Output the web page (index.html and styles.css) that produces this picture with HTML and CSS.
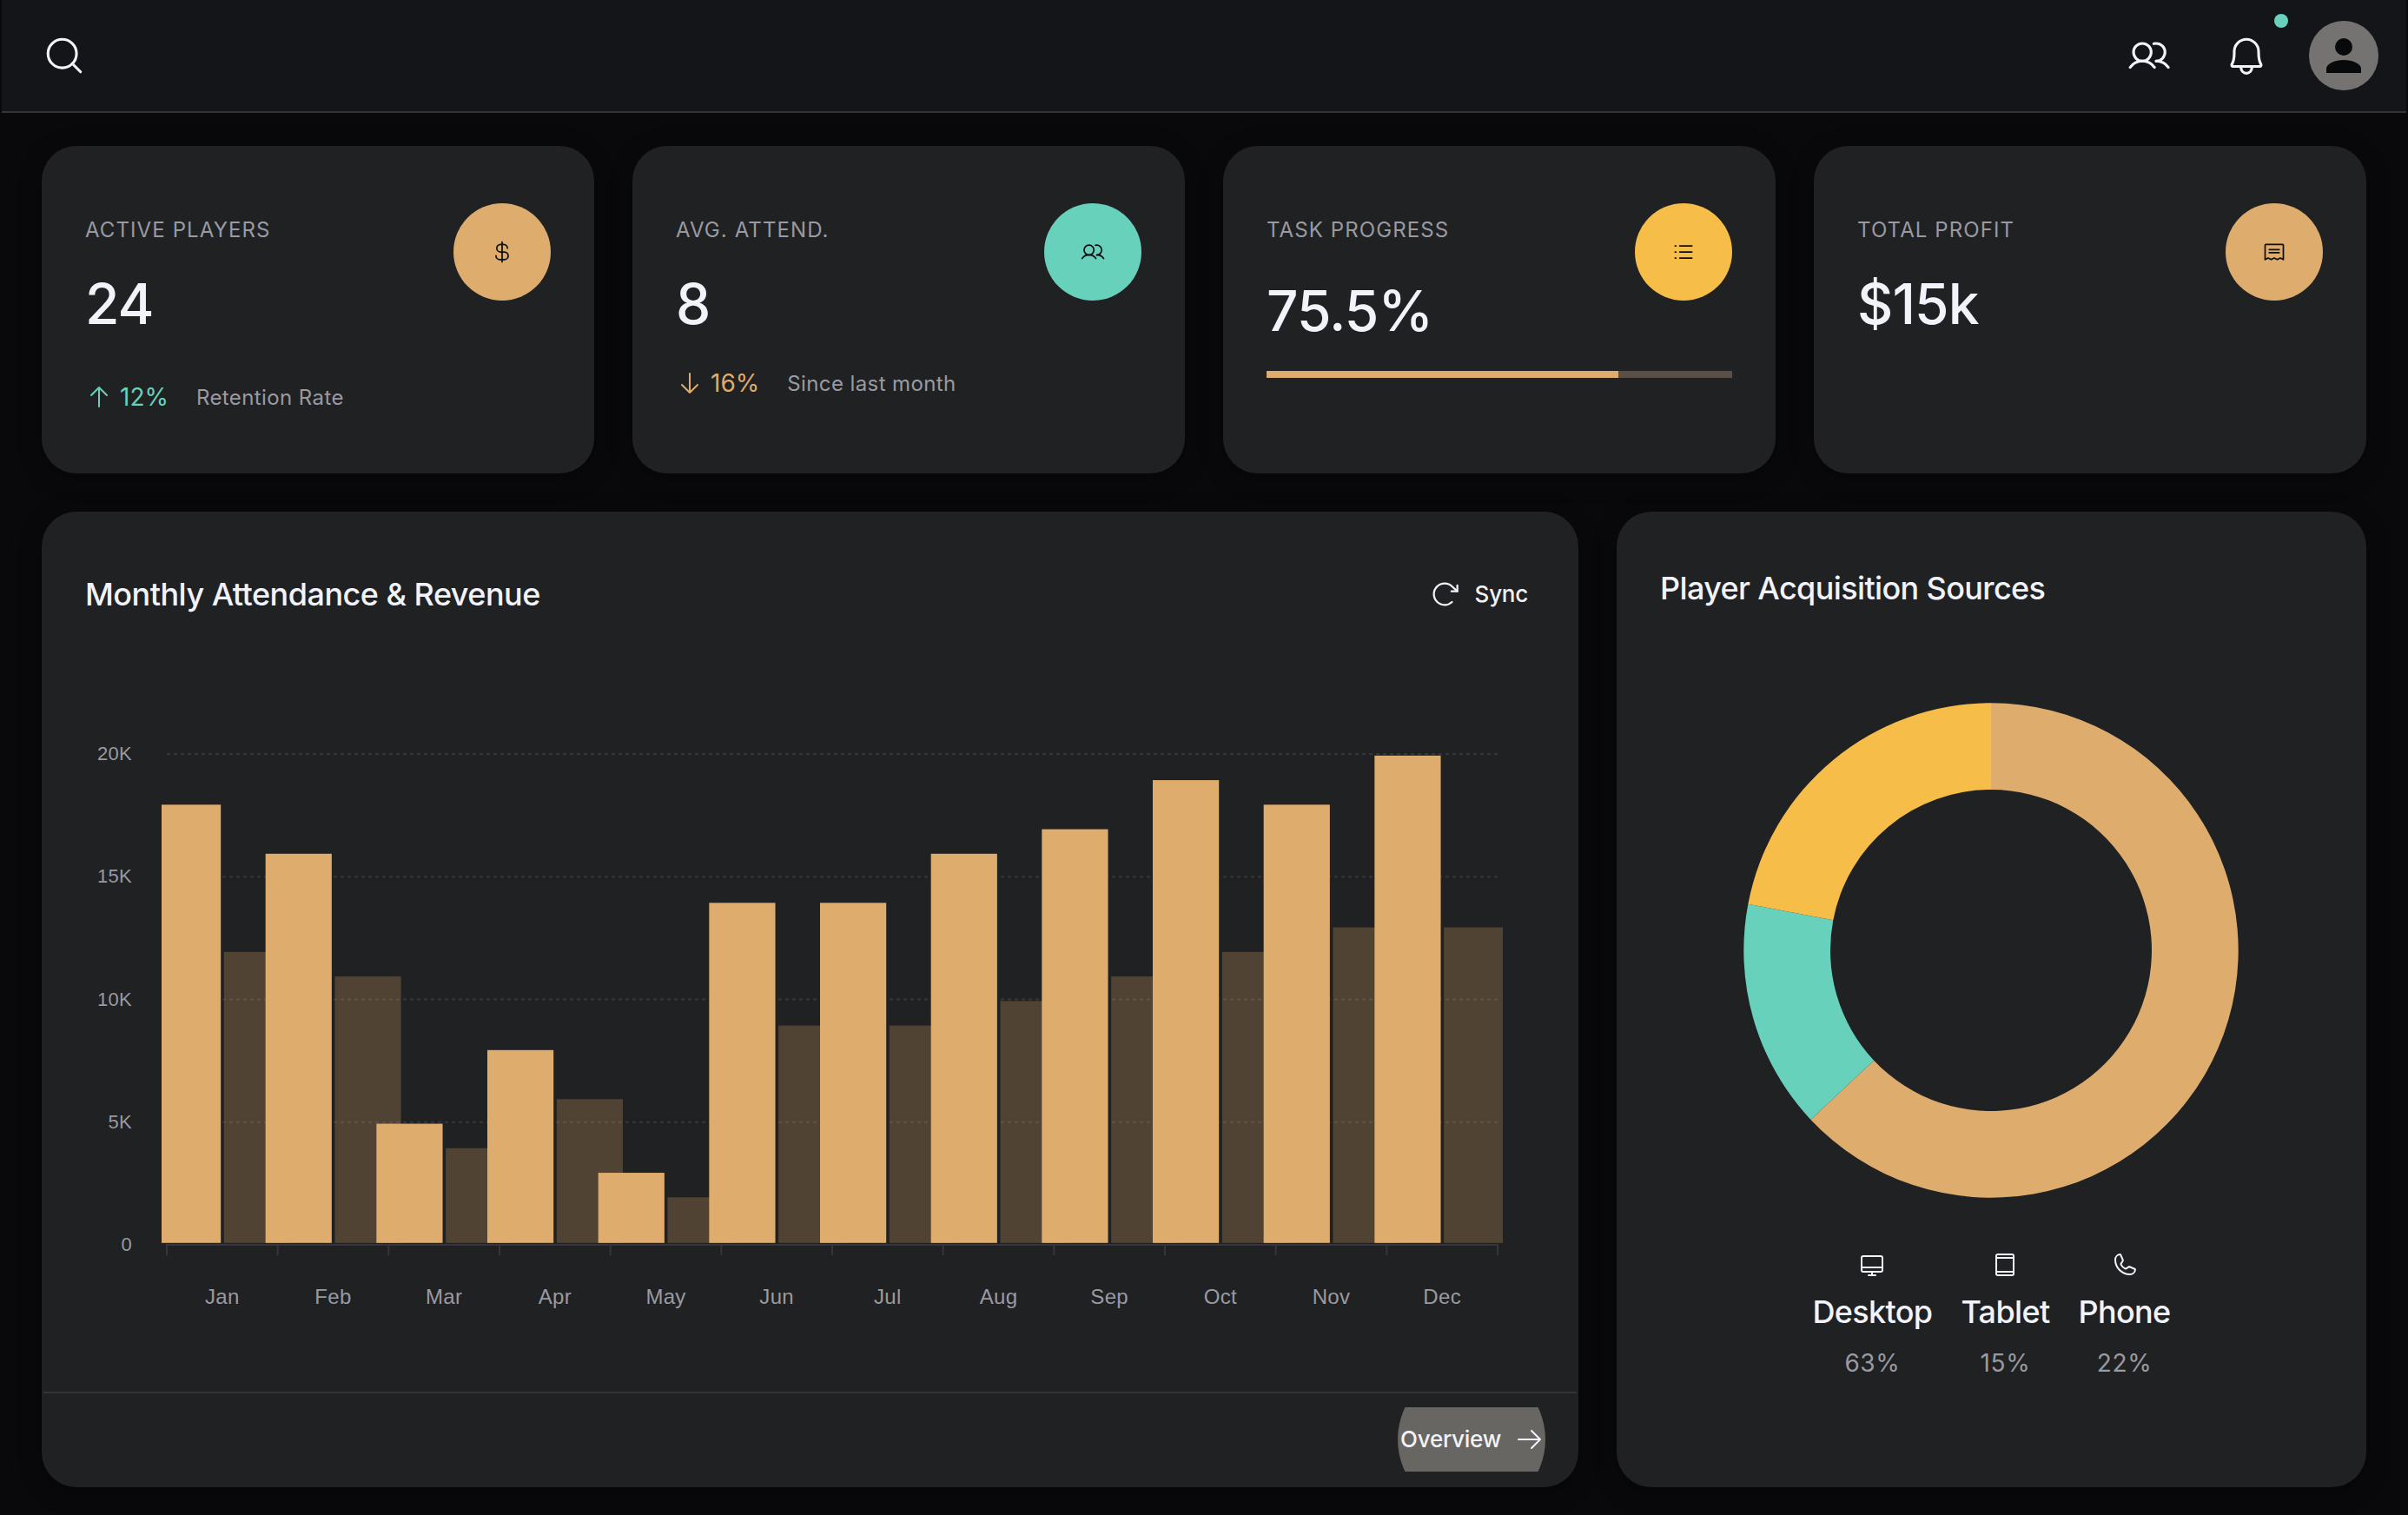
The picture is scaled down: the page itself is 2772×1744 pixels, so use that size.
FILE: index.html
```html
<!DOCTYPE html>
<html lang="en">
<head>
  <meta charset="UTF-8" />
  <meta name="viewport" content="width=device-width, initial-scale=1.0"/>
  <title>Team Dashboard</title>
  <link rel="stylesheet" href="styles.css">
</head>
<body>

  <header class="topbar">
    <svg class="icon icon-lg" viewBox="0 0 256 256"><circle cx="116" cy="116" r="84"/><path d="M175.4 175.4 224 224"/></svg>
    <div class="topbar-right">
      <svg class="icon icon-lg" viewBox="0 0 256 256"><circle cx="88" cy="108" r="52"/><path d="M155.4 57.9A54.5 54.5 0 0 1 169.5 56a52 52 0 0 1 0 104"/><path d="M16 197.4a88 88 0 0 1 144 0"/><path d="M169.5 160a87.9 87.9 0 0 1 72 37.4"/></svg>
      <div class="bell">
        <svg class="icon icon-lg" viewBox="0 0 256 256"><path d="M56.2 104a71.9 71.9 0 0 1 72.3-72c39.6.3 71.3 33.2 71.3 72.9V112c0 35.8 7.5 56.6 14.1 68a8 8 0 0 1-6.9 12H49a8 8 0 0 1-6.9-12c6.6-11.4 14.1-32.2 14.1-68Z"/><path d="M96 192v8a32 32 0 0 0 64 0v-8"/></svg>
        <span class="bell-dot"></span>
      </div>
      <div class="avatar">
        <svg viewBox="0 0 80 80"><circle cx="40" cy="30" r="10"/><path d="M20 60v-5c0-6 11-10 20-10s20 4 20 10v5Z"/></svg>
      </div>
    </div>
  </header>

  <main class="dashboard">
    <section class="stats">
      <div class="card stat">
        <div class="stat-text">
          <div class="label">ACTIVE PLAYERS</div>
          <div class="value">24</div>
          <div class="trend trend-up">
            <svg class="icon" viewBox="0 0 256 256"><path d="M128 216V40M56 112l72-72 72 72"/></svg>
            <span class="percent">12%</span>
            <span class="note">Retention Rate</span>
          </div>
        </div>
        <div class="badge tan">
          <svg class="icon icon-sm" viewBox="0 0 256 256"><path d="M128 24v208M184 88a40 40 0 0 0-40-40h-32a40 40 0 0 0 0 80h40a40 40 0 0 1 0 80h-48a40 40 0 0 1-40-40"/></svg>
        </div>
      </div>

      <div class="card stat">
        <div class="stat-text">
          <div class="label">AVG. ATTEND.</div>
          <div class="value">8</div>
          <div class="trend trend-down">
            <svg class="icon" viewBox="0 0 256 256"><path d="M128 40v176M56 144l72 72 72-72"/></svg>
            <span class="percent">16%</span>
            <span class="note">Since last month</span>
          </div>
        </div>
        <div class="badge teal">
          <svg class="icon icon-sm" viewBox="0 0 256 256"><circle cx="88" cy="108" r="52"/><path d="M155.4 57.9A54.5 54.5 0 0 1 169.5 56a52 52 0 0 1 0 104"/><path d="M16 197.4a88 88 0 0 1 144 0"/><path d="M169.5 160a87.9 87.9 0 0 1 72 37.4"/></svg>
        </div>
      </div>

      <div class="card stat">
        <div class="stat-text">
          <div class="label">TASK PROGRESS</div>
          <div class="value value-low">75.5%</div>
        </div>
        <div class="badge yellow">
          <svg class="icon icon-sm" viewBox="0 0 256 256"><path d="M88 64h128M88 128h128M88 192h128M40 64h8M40 128h8M40 192h8"/></svg>
        </div>
        <div class="progress"><div class="progress-fill" style="width: 75.5%"></div></div>
      </div>

      <div class="card stat">
        <div class="stat-text">
          <div class="label">TOTAL PROFIT</div>
          <div class="value">$15k</div>
        </div>
        <div class="badge tan">
          <svg class="icon icon-sm" viewBox="0 0 256 256"><path d="M76 104h104M76 136h104"/><path d="M32 208V56a8 8 0 0 1 8-8h176a8 8 0 0 1 8 8v152l-32-16-32 16-32-16-32 16-32-16Z"/></svg>
        </div>
      </div>
    </section>

    <section class="panels">
      <div class="card revenue">
        <div class="panel-head">
          <h2>Monthly Attendance &amp; Revenue</h2>
          <button class="sync-btn">
            <svg class="icon icon-sync" viewBox="0 0 256 256"><path d="M184 104h48V56"/><path d="M188.4 192a88 88 0 1 1 1.8-126.2L232 104"/></svg>
            Sync
          </button>
        </div>
        <svg class="chart" id="barChart" viewBox="0 0 1765 862"></svg>
        <div class="panel-foot">
          <button class="overview-btn">
            <span>Overview</span>
            <svg class="icon" viewBox="0 0 256 256"><path d="M24 128h200M144 48l80 80-80 80"/></svg>
          </button>
        </div>
      </div>

      <div class="card sources">
        <h2>Player Acquisition Sources</h2>
        <svg class="donut" id="donut" viewBox="-286 -286 572 572"></svg>
        <div class="legend">
          <div class="legend-item">
            <svg class="icon" viewBox="0 0 256 256"><rect x="32" y="48" width="192" height="144" rx="16"/><path d="M160 224H96M32 152h192M128 192v32"/></svg>
            <div class="legend-name">Desktop</div>
            <div class="legend-value">63%</div>
          </div>
          <div class="legend-item">
            <svg class="icon" viewBox="0 0 256 256"><rect x="48" y="32" width="160" height="192" rx="14"/><path d="M48 64h160M48 192h160"/></svg>
            <div class="legend-name">Tablet</div>
            <div class="legend-value">15%</div>
          </div>
          <div class="legend-item">
            <svg class="icon" viewBox="0 0 256 256"><path d="M92.5 124.8a83.6 83.6 0 0 0 39 38.9 8 8 0 0 0 7.9-.6l25-16.7a7.9 7.9 0 0 1 7.6-.7l46.8 20.1a7.9 7.9 0 0 1 4.8 8.3A48 48 0 0 1 176 216 136 136 0 0 1 40 80a48 48 0 0 1 41.9-47.6 7.9 7.9 0 0 1 8.3 4.8l20.1 46.9a8 8 0 0 1-.6 7.5L93 117a8 8 0 0 0-.5 7.8Z"/></svg>
            <div class="legend-name">Phone</div>
            <div class="legend-value">22%</div>
          </div>
        </div>
      </div>
    </section>
  </main>

  <script>
    const months = ["Jan", "Feb", "Mar", "Apr", "May", "Jun", "Jul", "Aug", "Sep", "Oct", "Nov", "Dec"];
    const attendance = [18, 16, 5, 8, 3, 14, 14, 16, 17, 19, 18, 20];
    const revenue = [12, 11, 4, 6, 2, 9, 9, 10, 11, 12, 13, 13];

    const left = 142;
    const right = 1674;
    const base = 693;
    const unit = 28.25;
    const step = (right - left) / 12;

    function drawBar(x, value, cls) {
      const top = base + 1.8 - value * unit;
      const start = Math.max(x, left - 6);
      const end = Math.min(x + 76.2, right + 6);
      return `<rect class="${cls}" x="${start}" y="${top}" width="${end - start}" height="${base - 2.2 - top}"/>`;
    }

    function drawBarChart() {
      let html = "";
      for (let k = 0; k <= 20; k += 5) {
        const y = base - k * unit;
        if (k > 0) html += `<line class="grid" x1="${left}" x2="${right}" y1="${y}" y2="${y}"/>`;
        html += `<text class="y-label" x="102" y="${y + 7}">${k ? k + "K" : 0}</text>`;
      }
      html += `<line class="axis" x1="${left - 1}" x2="${right + 1}" y1="${base}" y2="${base}"/>`;
      for (let i = 0; i <= 12; i++) {
        const x = left + i * step;
        html += `<line class="axis" x1="${x}" x2="${x}" y1="${base}" y2="${base + 12}"/>`;
      }
      months.forEach((month, i) => {
        const x = left + i * step;
        html += drawBar(x + 65.8, revenue[i], "bar-revenue");
        html += `<text class="x-label" x="${x + step / 2}" y="761">${month}</text>`;
      });
      months.forEach((month, i) => {
        html += drawBar(left + i * step - 14, attendance[i], "bar-attendance");
      });
      document.getElementById("barChart").innerHTML = html;
    }

    function drawDonut() {
      const slices = [[63, "#deac6c"], [15, "#68d1bc"], [22, "#f6bd49"]];
      const outer = 284.7;
      const inner = 185;
      let total = 0;
      let html = "";
      slices.forEach(([share, color]) => {
        const a = total / 50 * Math.PI;
        total += share;
        const b = total / 50 * Math.PI;
        const point = (r, t) => `${(r * Math.sin(t)).toFixed(2)} ${(-r * Math.cos(t)).toFixed(2)}`;
        const large = share > 50 ? 1 : 0;
        html += `<path fill="${color}" d="M${point(outer, a)}A${outer} ${outer} 0 ${large} 1 ${point(outer, b)}L${point(inner, b)}A${inner} ${inner} 0 ${large} 0 ${point(inner, a)}Z"/>`;
      });
      document.getElementById("donut").innerHTML = html;
    }

    drawBarChart();
    drawDonut();
  </script>
</body>
</html>
```
FILE: styles.css
```css
* {
  box-sizing: border-box;
}

body {
  margin: 0;
  height: 1744px;
  font-family: Inter, "Liberation Sans", sans-serif;
  background: #09090c;
  color: #f2f3fa;
  overflow: hidden;
}

h2 {
  margin: 0;
  font-size: 36px;
  font-weight: 450;
  line-height: 44px;
  letter-spacing: -0.52px;
}

button {
  border: none;
  background: none;
  color: inherit;
  font: 450 26px/32px Inter, "Liberation Sans", sans-serif;
  letter-spacing: -0.25px;
  padding: 0;
  cursor: pointer;
}

.icon {
  width: 32px;
  height: 32px;
  flex: none;
  fill: none;
  stroke: currentColor;
  stroke-width: 16;
  stroke-linecap: round;
  stroke-linejoin: round;
}

.icon-lg {
  width: 50px;
  height: 50px;
}

.icon-sm {
  width: 28px;
  height: 28px;
}

.icon-sync {
  width: 36px;
  height: 36px;
}

/* Top bar */
.topbar {
  height: 130px;
  margin: 0 2px;
  padding: 0 32px 0 47px;
  display: flex;
  justify-content: space-between;
  align-items: center;
  background: #141518;
  border-bottom: 2px solid #32343c;
}

.topbar-right {
  display: flex;
  align-items: center;
}

.bell {
  position: relative;
  height: 50px;
  margin: 0 47px 0 62px;
}

.bell-dot {
  position: absolute;
  top: -23px;
  right: -23px;
  width: 16px;
  height: 16px;
  border-radius: 50%;
  background: #68d1bc;
}

.avatar {
  width: 80px;
  height: 80px;
  border-radius: 50%;
  background: #747372;
}

.avatar svg {
  display: block;
  fill: #08090b;
}

/* Cards */
.dashboard {
  padding: 38px 48px 32px;
}

.card {
  background: #202123;
  border-radius: 40px;
  box-shadow: 0 6px 28px rgba(0, 0, 0, 0.3);
}

.stats {
  display: grid;
  grid-template-columns: repeat(4, 1fr);
  gap: 44px;
}

.stat {
  height: 377px;
  padding: 66px 50px 0;
  display: flex;
  flex-wrap: wrap;
  justify-content: space-between;
  align-content: flex-start;
}

.label {
  margin-top: 15px;
  font-size: 24px;
  line-height: 32px;
  letter-spacing: 1.1px;
  color: #999aa2;
}

.value {
  margin-top: 29px;
  font-size: 64px;
  font-weight: 500;
  line-height: 80px;
  letter-spacing: -0.9px;
}

.value-low {
  margin-top: 37px;
}

.trend {
  display: flex;
  align-items: center;
  margin-top: 47px;
  height: 40px;
}

.trend-down {
  margin-top: 31px;
}

.trend-up .icon,
.trend-up .percent {
  color: #68d1bc;
}

.trend-down .icon,
.trend-down .percent {
  color: #deac6c;
}

.percent {
  margin-left: 8px;
  font-size: 28px;
}

.note {
  margin-left: 32px;
  font-size: 24px;
  letter-spacing: 0.4px;
  color: #999aa2;
}

.badge {
  width: 112px;
  height: 112px;
  border-radius: 50%;
  display: flex;
  justify-content: center;
  align-items: center;
  color: #0e0f11;
}

.tan {
  background: #deac6c;
}

.teal {
  background: #68d1bc;
}

.yellow {
  background: #f6bd49;
}

.progress {
  width: 100%;
  height: 8px;
  margin-top: 29px;
  background: #5b5047;
}

.progress-fill {
  height: 100%;
  background: #deac6c;
}

/* Chart panels */
.panels {
  display: grid;
  grid-template-columns: 1769px 863px;
  gap: 44px;
  margin-top: 44px;
  height: 1123px;
}

.revenue {
  padding: 0 2px;
  display: flex;
  flex-direction: column;
}

.panel-head {
  display: flex;
  justify-content: space-between;
  align-items: center;
  height: 151px;
  padding: 38px 56px 0 48px;
}

.sync-btn {
  display: flex;
  align-items: center;
  gap: 17px;
}

.chart {
  display: block;
  width: 1765px;
  height: 862px;
}

.grid {
  stroke: #34353d;
  stroke-width: 2;
  stroke-dasharray: 4 4;
}

.axis {
  stroke: #34353d;
  stroke-width: 2;
}

.bar-attendance {
  fill: #deac6c;
}

.bar-revenue {
  fill: rgba(222, 172, 98, 0.25);
}

.y-label,
.x-label {
  font-family: "Liberation Sans", Arial, sans-serif;
  font-size: 22px;
  letter-spacing: 0.3px;
  fill: #999aa2;
  text-anchor: end;
}

.x-label {
  font-size: 24px;
  text-anchor: middle;
}

.panel-foot {
  flex: 1;
  display: flex;
  justify-content: flex-end;
  align-items: flex-start;
  padding: 16px 36px 0 0;
  border-top: 2px solid #32343c;
}

.overview-btn {
  position: relative;
  width: 170px;
  height: 74px;
  overflow: hidden;
  display: flex;
  align-items: center;
  justify-content: space-between;
  padding: 0 2px 0 3px;
  isolation: isolate;
}

/* hover ripple, cut off by the button edges */
.overview-btn::before {
  content: "";
  position: absolute;
  left: 0;
  top: -48px;
  width: 170px;
  height: 170px;
  border-radius: 50%;
  background: #686663;
  z-index: -1;
}

.sources {
  padding: 66px 50px 0;
  display: flex;
  flex-direction: column;
}

.sources h2 {
  letter-spacing: -0.63px;
}

.donut {
  display: block;
  width: 572px;
  height: 572px;
  margin: 109px 0 0 95px;
}

.legend {
  display: flex;
  justify-content: center;
  gap: 33px;
  margin-top: 60px;
}

.legend-item {
  display: flex;
  flex-direction: column;
  align-items: center;
}

.legend-name {
  margin-top: 16px;
  font-size: 36px;
  font-weight: 450;
  line-height: 44px;
  letter-spacing: -0.65px;
}

.legend-value {
  margin-top: 19px;
  font-size: 28px;
  line-height: 36px;
  letter-spacing: 0.6px;
  color: #999aa2;
}
```
